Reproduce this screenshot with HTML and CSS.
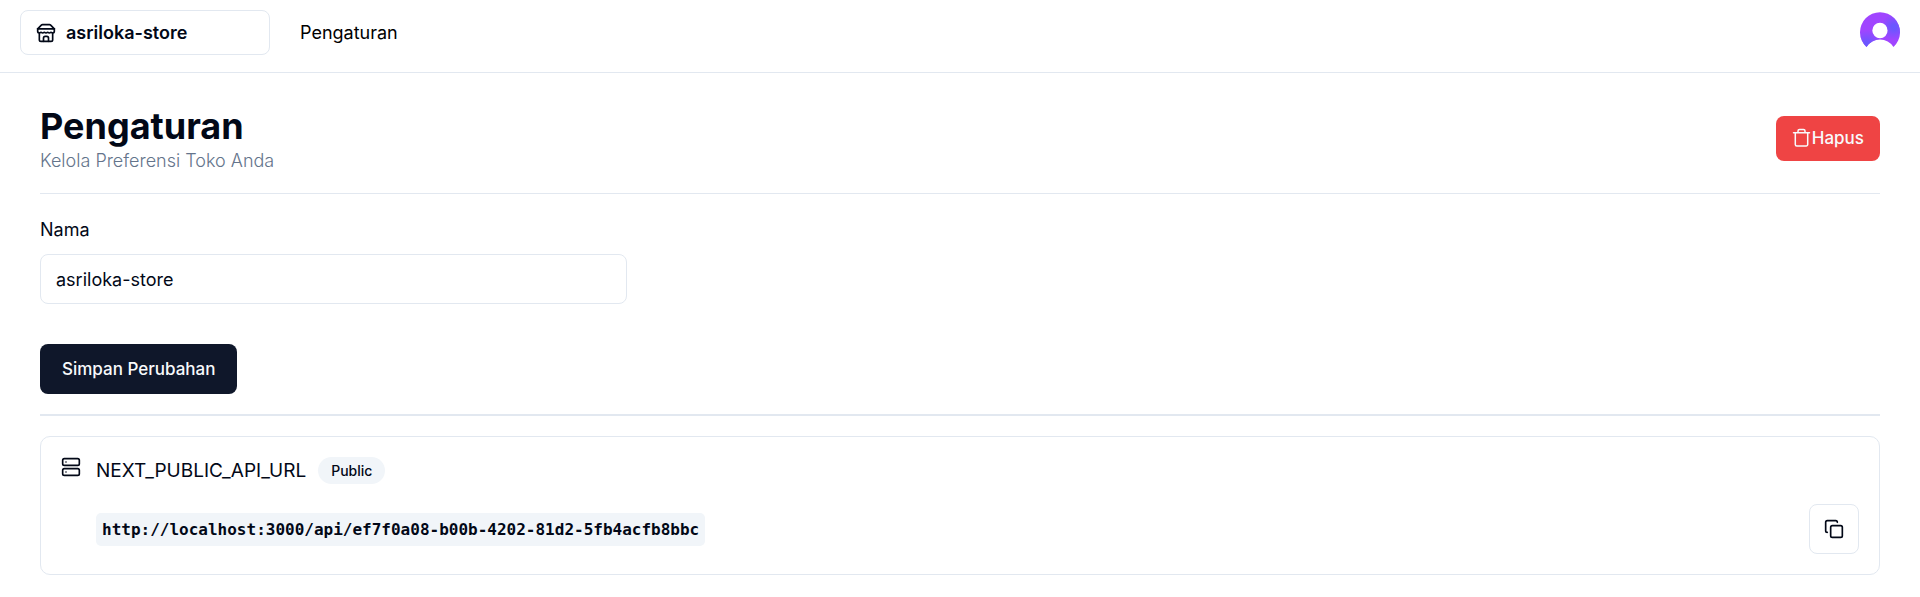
FILE: index.html
```html
<!DOCTYPE html>
<html lang="id">
<head>
<meta charset="utf-8">
<meta name="viewport" content="width=device-width, initial-scale=1">
<title>Pengaturan</title>
<link rel="stylesheet" href="styles.css">
</head>
<body>
<header class="navbar">
  <button class="store-switcher" type="button">
    <svg class="icon" viewBox="0 0 24 24" aria-hidden="true"><path d="m2 7 4.41-4.41A2 2 0 0 1 7.83 2h8.34a2 2 0 0 1 1.42.59L22 7"/><path d="M4 12v8a2 2 0 0 0 2 2h12a2 2 0 0 0 2-2v-8"/><path d="M15 22v-4a2 2 0 0 0-2-2h-2a2 2 0 0 0-2 2v4"/><path d="M2 7h20"/><path d="M22 7v3a2 2 0 0 1-2 2a2.7 2.7 0 0 1-1.59-.63.7.7 0 0 0-.82 0A2.7 2.7 0 0 1 16 12a2.7 2.7 0 0 1-1.59-.63.7.7 0 0 0-.82 0A2.7 2.7 0 0 1 12 12a2.7 2.7 0 0 1-1.59-.63.7.7 0 0 0-.82 0A2.7 2.7 0 0 1 8 12a2.7 2.7 0 0 1-1.59-.63.7.7 0 0 0-.82 0A2.7 2.7 0 0 1 4 12a2 2 0 0 1-2-2V7"/></svg>
    <span>asriloka-store</span>
  </button>
  <nav class="main-nav"><a class="nav-link" href="#">Pengaturan</a></nav>
  <button class="avatar" type="button" aria-label="Akun">
    <svg viewBox="0 0 40 40" aria-hidden="true">
      <defs>
        <radialGradient id="glow"><stop offset="0" stop-color="#6a58ff"/><stop offset="0.2" stop-color="#6c56ff"/><stop offset="1" stop-color="#6c56ff" stop-opacity="0"/></radialGradient>
        <clipPath id="avatar-clip"><path clip-rule="evenodd" d="M6.500 35A20 20 0 1 1 33.500 35A16 16 0 0 0 6.500 35ZM20 10.800a7.700 7.700 0 1 0 0 15.400a7.700 7.700 0 1 0 0-15.400Z"/></clipPath>
      </defs>
      <g clip-path="url(#avatar-clip)"><rect width="40" height="40" fill="#a045ff"/><circle cx="34" cy="15" r="13" fill="url(#glow)"/><circle cx="7" cy="33" r="15" fill="url(#glow)"/></g>
    </svg>
  </button>
</header>
<main class="page">
  <div class="heading">
    <div>
      <h1 class="title">Pengaturan</h1>
      <p class="subtitle">Kelola Preferensi Toko Anda</p>
    </div>
    <button class="button button-danger" type="button">
      <svg class="icon-trash" viewBox="0 0 20 20" aria-hidden="true"><path d="M1.500 4.700h16M6 4.500V3a1.500 1.500 0 0 1 1.500-1.500h4a1.500 1.500 0 0 1 1.500 1.500V4.500M3.300 5v11.500a1.500 1.500 0 0 0 1.500 1.500h9.400a1.500 1.500 0 0 0 1.500-1.500V5"/></svg>Hapus
    </button>
  </div>
  <hr class="separator">
  <form class="form">
    <div class="fields">
      <div class="field">
        <label class="label" for="name">Nama</label>
        <input class="input" id="name" type="text" value="asriloka-store">
      </div>
    </div>
    <button class="button button-primary" type="button">Simpan Perubahan</button>
  </form>
  <hr class="separator separator-thick">
  <section class="api-card">
    <svg class="icon" viewBox="0 0 24 24" aria-hidden="true"><rect width="20" height="8" x="2" y="2" rx="2"/><rect width="20" height="8" x="2" y="14" rx="2"/><path d="M6 6h.01M6 18h.01"/></svg>
    <div class="api-body">
      <h2 class="api-title">NEXT_PUBLIC_API_URL <span class="badge">Public</span></h2>
      <div class="api-row">
        <code class="api-url">http://localhost:3000/api/ef7f0a08-b00b-4202-81d2-5fb4acfb8bbc</code>
        <button class="button-copy" type="button" aria-label="Salin">
          <svg class="icon" viewBox="0 0 24 24" aria-hidden="true"><rect width="14" height="14" x="8" y="8" rx="2"/><path d="M4 16c-1.100 0-2-.9-2-2V4c0-1.100.9-2 2-2h10c1.100 0 2 .9 2 2"/></svg>
        </button>
      </div>
    </div>
  </section>
</main>
</body>
</html>
```
FILE: styles.css
```css
*, *::before, *::after { box-sizing: border-box; }

body {
  margin: 0;
  background: #fff;
  color: #020817;
  font-family: Inter, "Liberation Sans", sans-serif;
  font-size: 18px;
  line-height: 24px;
}

button, input { font: inherit; color: inherit; }
button { cursor: pointer; }
h1, h2, p { margin: 0; }

.icon {
  flex: none;
  width: 20px;
  height: 20px;
  fill: none;
  stroke: currentColor;
  stroke-width: 2;
  stroke-linecap: round;
  stroke-linejoin: round;
}

.navbar {
  display: flex;
  align-items: flex-start;
  padding: 10px 20px 17px;
  border-bottom: 1px solid #e2e8f0;
}

.store-switcher {
  display: flex;
  align-items: center;
  gap: 10px;
  width: 250px;
  height: 45px;
  padding: 0 15px;
  border: 1px solid #e2e8f0;
  border-radius: 8px;
  background: #fff;
  font-weight: 600;
}

.main-nav { margin-left: 30px; padding-top: 11px; }
.nav-link { color: #000; text-decoration: none; }

.avatar {
  width: 40px;
  height: 40px;
  margin: 2px 0 0 auto;
  padding: 0;
  border: 0;
  border-radius: 50%;
  background: none;
}
.avatar svg { display: block; width: 100%; height: 100%; }

.page { padding: 30px 40px; }

.heading {
  display: flex;
  align-items: center;
  justify-content: space-between;
  padding-bottom: 20px;
}

.title { font-size: 36px; line-height: 46px; font-weight: 700; }
.subtitle { color: #64748b; font-weight: 300; }

.button { border: 0; border-radius: 8px; font-size: 17px; font-weight: 500; }
.button-danger {
  display: flex;
  align-items: center;
  height: 45px;
  padding: 0 16px;
  background: #ef4444;
  color: #f8fafc;
}
.icon-trash {
  width: 20px;
  height: 20px;
  fill: none;
  stroke: currentColor;
  stroke-width: 1.5;
  stroke-linecap: round;
}
.button-primary { height: 50px; padding: 0 22px; background: #0f172a; color: #f8fafc; }

.separator { height: 1px; margin: 0; border: 0; background: #e2e8f0; }
.separator-thick { height: 2px; margin: 20px 0; }

.form { display: grid; gap: 40px; justify-items: start; padding-top: 24px; }
.fields { display: grid; grid-template-columns: repeat(3, 1fr); gap: 40px; width: 100%; }
.field { display: grid; gap: 12px; }
.input {
  width: 100%;
  height: 50px;
  padding: 0 15px;
  border: 1px solid #e2e8f0;
  border-radius: 8px;
  background: #fff;
}

.api-card {
  display: flex;
  gap: 15px;
  padding: 20px;
  border: 1px solid #e2e8f0;
  border-radius: 10px;
}
.api-body { flex: 1; }
.api-title {
  display: flex;
  align-items: center;
  gap: 12px;
  font-size: 19px;
  line-height: 27px;
  font-weight: 400;
}
.badge {
  padding: 0 13px;
  border-radius: 14px;
  background: #f1f5f9;
  font-size: 14px;
  font-weight: 500;
}
.api-row { display: flex; align-items: center; justify-content: space-between; margin-top: 20px; }
.api-url {
  padding: 4px 6px;
  border-radius: 5px;
  background: #f1f5f9;
  font-family: "DejaVu Sans Mono", monospace;
  font-size: 16px;
  line-height: 25px;
  font-weight: 600;
}
.button-copy {
  display: grid;
  place-items: center;
  width: 50px;
  height: 50px;
  padding: 0;
  border: 1px solid #e2e8f0;
  border-radius: 8px;
  background: #fff;
}
```
